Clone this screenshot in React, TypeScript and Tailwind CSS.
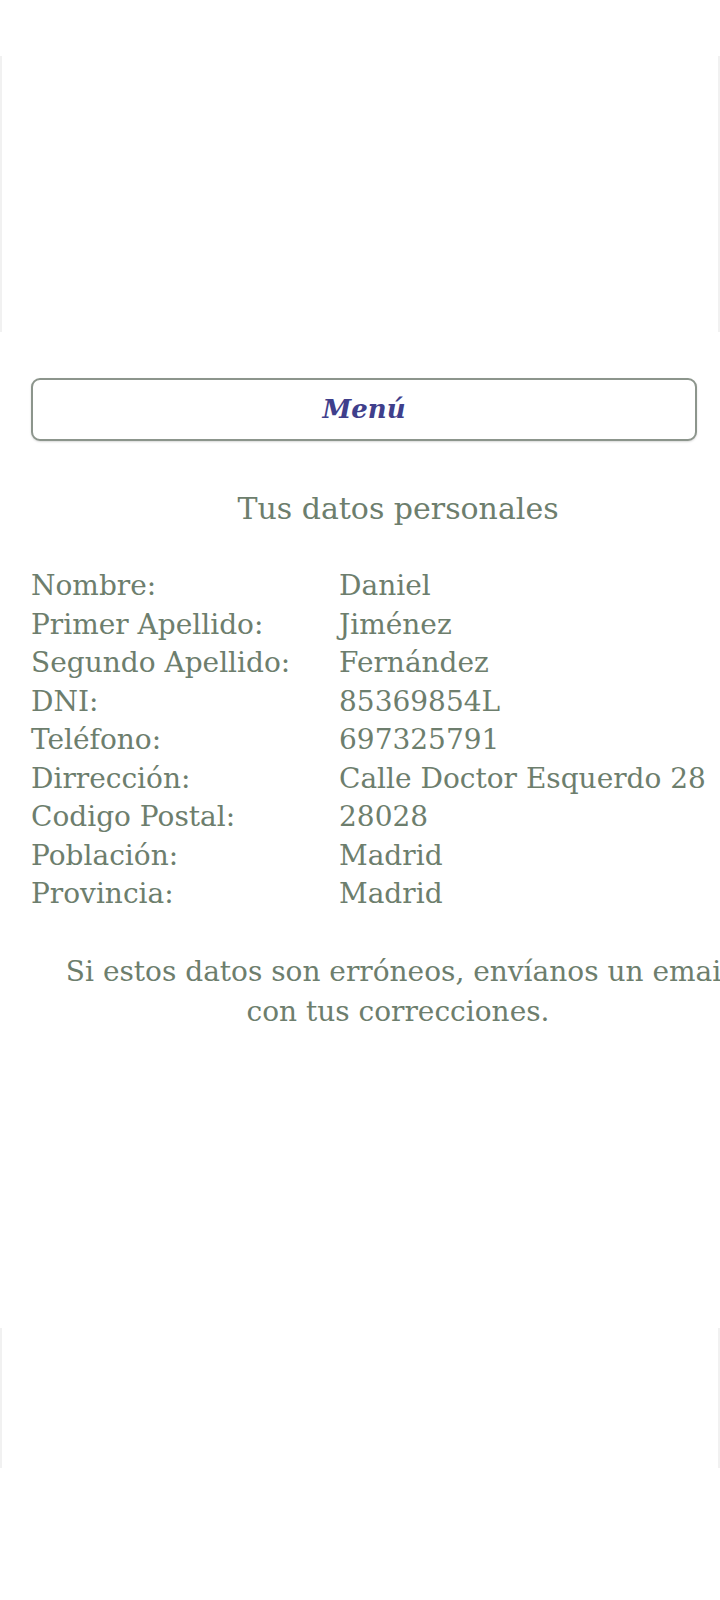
import React from 'react';

const rows: [string, string][] = [
  ['Nombre:', 'Daniel'],
  ['Primer Apellido:', 'Jiménez'],
  ['Segundo Apellido:', 'Fernández'],
  ['DNI:', '85369854L'],
  ['Teléfono:', '697325791'],
  ['Dirrección:', 'Calle Doctor Esquerdo 28'],
  ['Codigo Postal:', '28028'],
  ['Población:', 'Madrid'],
  ['Provincia:', 'Madrid'],
];

const AdFrame: React.FC<{ className: string }> = ({ className }) => (
  <div className={`w-[720px] border-x-2 border-[#f1f1f1] ${className}`} />
);

const App: React.FC = () => {
  return (
    <div className="w-[720px] min-h-[1600px] overflow-hidden bg-white text-[#6d7e6d] font-['DejaVu_Serif',serif]">
      <div className="h-[56px]" />
      <AdFrame className="h-[276px]" />

      <div className="w-[800px] pl-[31px] pt-[46px]">
        <button className="w-[666px] h-[63px] rounded-[9px] border-2 border-[#8c958c] bg-white shadow-[0_1px_2px_rgba(0,0,0,0.15)] text-[26px] italic font-bold text-[#3f3f8c]">
          Menú
        </button>

        <h1 className="mt-[48px] w-[734px] text-center text-[30px] leading-[40px]">
          Tus datos personales
        </h1>

        <div className="mt-[38px] grid grid-cols-[308px_1fr] text-[28px] leading-[38.5px]">
          {rows.map(([label, value]) => (
            <React.Fragment key={label}>
              <span className="whitespace-nowrap">{label}</span>
              <span className="whitespace-nowrap">{value}</span>
            </React.Fragment>
          ))}
        </div>

        <p className="mt-[38px] w-[734px] whitespace-nowrap text-center text-[28px] leading-[40px]">
          Si estos datos son erróneos, envíanos un email
          <br />
          con tus correcciones.
        </p>
      </div>

      <div className="h-[296px]" />
      <AdFrame className="h-[140px]" />
    </div>
  );
};

export default App;
